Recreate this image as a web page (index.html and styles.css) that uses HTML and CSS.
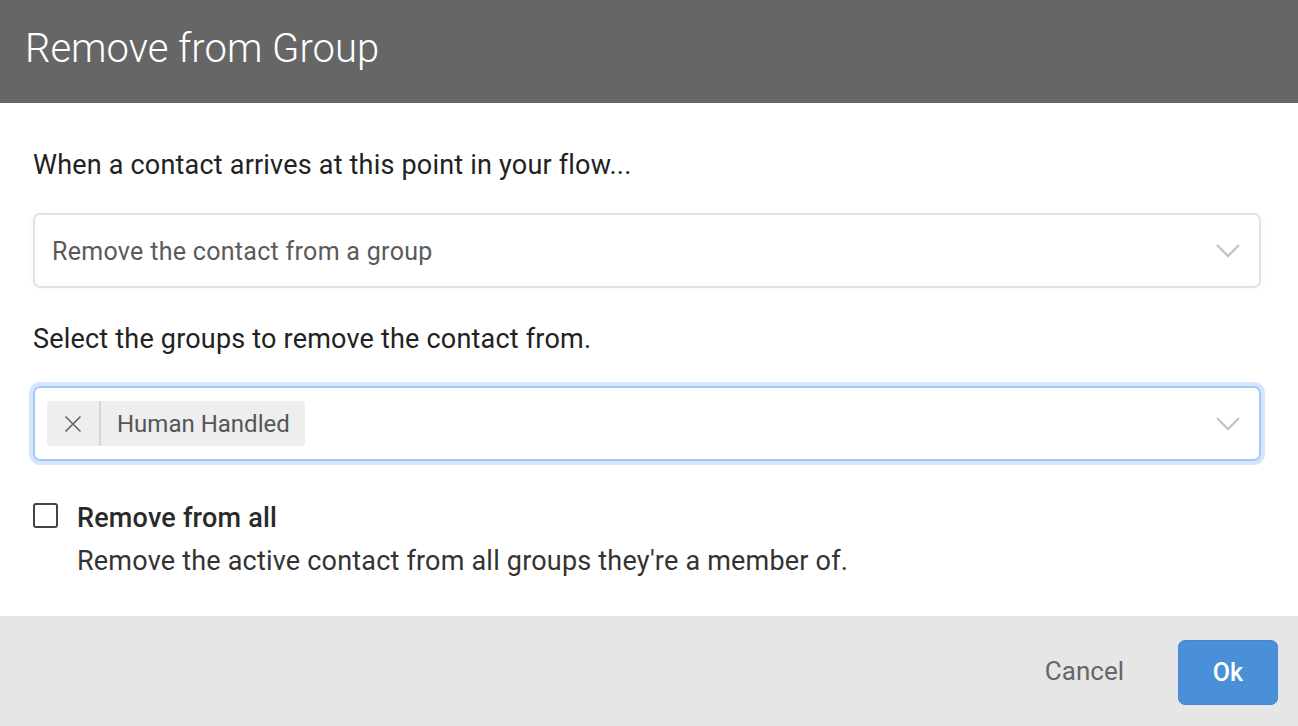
FILE: index.html
```html
<!DOCTYPE html>
<html>
<head>
<meta charset="utf-8">
<link rel="stylesheet" href="styles.css">
</head>
<body>
<div class="dialog">
  <div class="header"><h1 class="title">Remove from Group</h1></div>
  <div class="content">
    <p class="label">When a contact arrives at this point in your flow...</p>
    <div class="select">
      <span class="select-value">Remove the contact from a group</span>
      <svg class="chevron" width="26" height="16" viewBox="0 0 26 16"><path d="M2 2 L13 13 L24 2" fill="none" stroke="#c4c4c4" stroke-width="2.4"/></svg>
    </div>
    <p class="label second">Select the groups to remove the contact from.</p>
    <div class="select focused">
      <div class="tag">
        <span class="tag-x"><svg width="18" height="18" viewBox="0 0 18 18"><path d="M1.5 1.5 L16.5 16.5 M16.5 1.5 L1.5 16.5" stroke="#666" stroke-width="1.6"/></svg></span>
        <span class="tag-label">Human Handled</span>
      </div>
      <svg class="chevron" width="26" height="16" viewBox="0 0 26 16"><path d="M2 2 L13 13 L24 2" fill="none" stroke="#c4c4c4" stroke-width="2.4"/></svg>
    </div>
    <div class="check-row">
      <span class="checkbox"></span>
      <div class="check-text">
        <div class="check-title">Remove from all</div>
        <div class="check-desc">Remove the active contact from all groups they're a member of.</div>
      </div>
    </div>
  </div>
  <div class="footer">
    <button class="btn-cancel">Cancel</button>
    <button class="btn-ok">Ok</button>
  </div>
</div>
</body>
</html>
```

FILE: styles.css
```css
html, body {
  margin: 0;
  padding: 0;
  background: #fff;
  font-family: Roboto, "Noto Sans", sans-serif;
}
.dialog {
  width: 1298px;
  height: 726px;
  display: flex;
  flex-direction: column;
}
.header {
  background: #666666;
  height: 103px;
  display: flex;
  align-items: center;
  padding-left: 25px;
  box-sizing: border-box;
}
.title {
  margin: 0;
  color: #fff;
  font-weight: 300;
  font-size: 40px;
  line-height: 48px;
  padding-bottom: 6px;
}
.content {
  flex: 1;
  padding: 0 37px 0 33px;
}
.label {
  margin: 46px 0 0 0;
  font-size: 27px;
  letter-spacing: 0.2px;
  line-height: 32px;
  color: #222;
}
.label.second {
  margin-top: 35px;
}
.select {
  margin-top: 32px;
  height: 75px;
  box-sizing: border-box;
  border: 2px solid #e2e2e2;
  border-radius: 7px;
  display: flex;
  align-items: center;
  padding: 2px 18px 0 17px;
  box-shadow: 0 0 8px rgba(0,0,0,0.04);
}
.select-value {
  flex: 1;
  font-size: 25px;
  letter-spacing: 0.3px;
  color: #5a5a5a;
}
.chevron {
  margin-left: auto;
  margin-top: -2px;
}
.select.focused {
  margin-top: 31px;
  border-color: #a6c8f6;
  box-shadow: 0 0 0 4px #d6e6fc;
  padding: 0 18px 0 12px;
}
.select.focused .chevron {
  margin-top: 0;
}
.tag {
  display: flex;
  align-items: stretch;
  height: 45px;
  background: #eeeeee;
  border-radius: 3px;
}
.tag-x {
  width: 52px;
  display: flex;
  align-items: center;
  justify-content: center;
  border-right: 2px solid #d6d6d6;
}
.tag-label {
  display: flex;
  align-items: center;
  padding: 0 15px 0 16px;
  font-size: 24px;
  color: #555;
}
.check-row {
  display: flex;
  margin-top: 41px;
}
.checkbox {
  width: 25px;
  height: 25px;
  box-sizing: border-box;
  border: 2px solid #444;
  border-radius: 3px;
  margin-top: 1px;
  margin-right: 19px;
  flex: none;
}
.check-title {
  font-size: 27px;
  font-weight: 500;
  letter-spacing: 0.2px;
  color: #2a2a2a;
  line-height: 32px;
}
.check-desc {
  font-size: 27px;
  letter-spacing: 0.2px;
  color: #333;
  line-height: 32px;
  margin-top: 11px;
}
.footer {
  height: 110px;
  background: #e6e6e6;
  display: flex;
  align-items: center;
  justify-content: flex-end;
  padding-right: 20px;
}
.btn-cancel {
  background: none;
  border: none;
  font-family: inherit;
  font-size: 26px;
  color: #666;
  margin-right: 54px;
  padding: 0;
}
.btn-ok {
  width: 100px;
  height: 65px;
  border: 1px solid #4588cf;
  border-radius: 7px;
  background: #4a90d9;
  color: #fff;
  font-family: inherit;
  font-size: 25px;
  font-weight: 500;
  margin-top: 3px;
}
```
